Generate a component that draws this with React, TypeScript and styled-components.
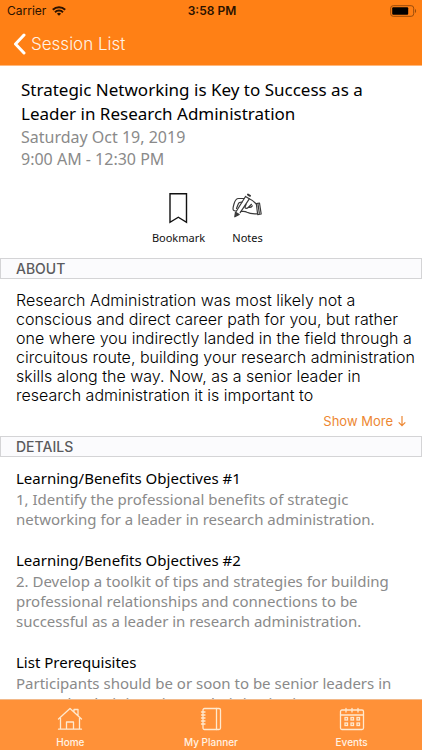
import React from "react";
import styled, { createGlobalStyle } from "styled-components";

const GlobalStyle = createGlobalStyle`
  * { box-sizing: border-box; }
  body { margin: 0; background: #fff; }
  h1, h2, h3, p { margin: 0; font-weight: 400; }
  button { border: 0; padding: 0; background: none; cursor: pointer; }
  a { text-decoration: none; }
`;

const humanist = `"Noto Sans", "Open Sans", sans-serif`;
const system = `Inter, Roboto, sans-serif`;

const Screen = styled.div`
  display: flex;
  flex-direction: column;
  height: 100vh;
  color: #000;
`;

const TopBar = styled.header`
  flex: none;
  background: #ff8015;
  border-bottom: 1px solid #ffb87c;
`;

const StatusBar = styled.div`
  display: grid;
  grid-template-columns: 1fr auto 1fr;
  align-items: center;
  height: 22px;
  padding: 0 5px 0 7px;
  font: 400 12px/14px ${system};
  color: #2b1200;
`;

const Carrier = styled.div`
  display: flex;
  align-items: center;
  gap: 6px;
`;

const Clock = styled.time`
  font-weight: 600;
`;

const Battery = styled.svg`
  justify-self: end;
`;

const BackButton = styled.button`
  display: flex;
  align-items: center;
  gap: 5px;
  height: 43px;
  margin-left: 13px;
  font: 300 17px/22px ${system};
  color: #fff3e6;
`;

const Content = styled.main`
  flex: 1;
  min-height: 0;
  overflow-y: auto;
  scrollbar-width: none;
`;

const Summary = styled.section`
  padding: 12px 21px 0;
`;

const Title = styled.h1`
  font: 400 17px/24px ${humanist};
`;

const When = styled.p`
  font: 400 16px/22px ${humanist};
  color: #8a8a8a;
`;

const Actions = styled.div`
  display: grid;
  grid-template-columns: 69px 69px;
  justify-content: center;
  padding: 22px 0 12px 4px;
`;

const Action = styled.button`
  display: flex;
  flex-direction: column;
  align-items: center;
  gap: 6px;
  font: 400 11px/16px ${humanist};
  color: #111;
`;

const SectionHeading = styled.h2`
  height: 21px;
  padding: 0 15px;
  border: 1px solid #d4d4d6;
  background: #fbfbfd;
  font: 500 14px/19px ${system};
  color: #5b5b5e;
`;

const About = styled.section`
  padding: 12px 2px 6px 16px;
`;

const AboutText = styled.p`
  font: 360 16px/19px ${system};
`;

const ShowMore = styled.button`
  display: flex;
  align-items: center;
  gap: 5px;
  margin: 7px 14px 0 auto;
  font: 400 13px/18px ${system};
  color: #ed8732;
`;

const Details = styled.section`
  display: flex;
  flex-direction: column;
  gap: 21px;
  padding: 11px 16px 20px;
`;

const DetailTitle = styled.h3`
  font: 400 15px/21px ${humanist};
`;

const DetailText = styled.p`
  font: 400 15px/20px ${humanist};
  color: #8a8a8a;
`;

const TabBar = styled.nav`
  flex: none;
  display: grid;
  grid-template-columns: repeat(3, 1fr);
  height: 51px;
  border-top: 1px solid #f2b98a;
  background: #ff9138;
`;

const Tab = styled.a`
  display: flex;
  flex-direction: column;
  align-items: center;
  gap: 4px;
  padding-top: 7px;
  font: 500 10px/14px ${system};
  color: #fff3e4;
`;

const WifiIcon = () => (
  <svg width="14" height="10" viewBox="0 0 14 10" fill="none" stroke="currentColor" strokeWidth="2" aria-hidden="true">
    <path d="M.8 3.8a8.8 8.8 0 0 1 12.4 0M3 6.2a5.7 5.7 0 0 1 8 0" />
    <path d="M7 9.800 4.900 7.800a3 3 0 0 1 4.200 0Z" fill="currentColor" stroke="none" />
  </svg>
);

const BackIcon = () => (
  <svg width="13" height="22" viewBox="0 0 13 22" fill="none" stroke="#fff" strokeWidth="3" strokeLinecap="round" strokeLinejoin="round" aria-hidden="true">
    <path d="M11 2 2.500 11l8.500 9" />
  </svg>
);

const BookmarkIcon = () => (
  <svg width="32" height="32" viewBox="0 0 32 32" fill="none" stroke="#111" strokeWidth="1.400" aria-hidden="true">
    <path d="M7 1.700h16.500v28.600l-8.200-5.100L7 30.300Z" />
  </svg>
);

const NotesIcon = () => (
  <svg width="32" height="32" viewBox="0 0 32 32" fill="none" stroke="#3a3a3a" strokeWidth="1.200" strokeLinecap="round" strokeLinejoin="round" aria-hidden="true">
    <path d="M13.500 4.500 4.500 19M17.300 6.800 8.200 20.700M13.500 4.500l3.800 2.300" />
    <path d="m2.800 24.800.7-4.600 3.700 2.200Z" fill="#3a3a3a" />
    <path d="m16 2.600 2 1.200" strokeWidth="2" />
    <path d="M11.800 6.500H6.500C4 6.500 3 8.500 2 12c-.8 2.800-1.600 5-.6 6.200.8 1 2 .8 3.100.8" />
    <path d="M4.500 16.500c1-2.500 1.500-5 2.800-6l2.500-.3" />
    <path d="M17.300 6.800c2.500 1 5 3.200 7 5.200M9 19.500c2.500-.3 4-.5 6 .8 3 1.800 6 1.600 9.800 1.500" />
    <path d="M14 12.500 13 15c-.3 1.500 2 1.700 3.200.5l3.300-3.200M16.500 15.300c2 .6 3-.3 3.800-1.500" />
    <path d="m24.300 11.500 3.200-.5 1.700 11-3.500.7ZM26 12.200l1.300 9" />
  </svg>
);

const ArrowDownIcon = () => (
  <svg width="8" height="12" viewBox="0 0 8 12" fill="none" stroke="currentColor" strokeWidth="1.200" aria-hidden="true">
    <path d="M4 1v9.500M.7 7.300 4 10.600l3.300-3.300" />
  </svg>
);

const HomeIcon = () => (
  <svg width="26" height="24" viewBox="0 0 26 24" fill="none" stroke="#ffe9cf" strokeWidth="1.300" strokeLinecap="round" strokeLinejoin="round" aria-hidden="true">
    <path d="M1.500 12 13 1.500 24.500 12M3.500 11v11M22.500 11v11M1.500 22.200h23M9.500 22v-7h7v7M17 5V2.500h4v6" />
  </svg>
);

const PlannerIcon = () => (
  <svg width="24" height="24" viewBox="0 0 24 24" fill="none" stroke="#ffe9cf" strokeWidth="1.300" strokeLinecap="round" aria-hidden="true">
    <rect x="4" y="1.500" width="17.500" height="21" rx="1.500" />
    <path d="M17.500 1.500v21M2.500 5h3.500M2.500 8h3.500M2.500 11h3.500M2.500 14h3.500M2.500 17h3.500" />
  </svg>
);

const CalendarIcon = () => (
  <svg width="26" height="24" viewBox="0 0 26 24" fill="none" stroke="#ffe9cf" strokeWidth="1.300" strokeLinecap="round" aria-hidden="true">
    <rect x="1.500" y="3" width="23" height="19.500" rx="1.500" />
    <path d="M1.500 8h23M7 1.500V5M13 1.500V5M19 1.500V5" />
    {[6, 12, 18].map((x) =>
      [10.5, 16].map((y) => <rect key={`${x}-${y}`} x={x} y={y} width="2.500" height="2.500" />)
    )}
  </svg>
);

const details = [
  {
    title: "Learning/Benefits Objectives #1",
    text: "1, Identify the professional benefits of strategic networking for a leader in research administration.",
  },
  {
    title: "Learning/Benefits Objectives #2",
    text: "2. Develop a toolkit of tips and strategies for building professional relationships and connections to be successful as a leader in research administration.",
  },
  {
    title: "List Prerequisites",
    text: "Participants should be or soon to be senior leaders in research administration at their institution.",
  },
];

const tabs = [
  { label: "Home", Icon: HomeIcon },
  { label: "My Planner", Icon: PlannerIcon },
  { label: "Events", Icon: CalendarIcon },
];

export default function App() {
  return (
    <Screen>
      <GlobalStyle />
      <TopBar>
        <StatusBar>
          <Carrier>
            Carrier
            <WifiIcon />
          </Carrier>
          <Clock>3:58 PM</Clock>
          <Battery width="27" height="12" viewBox="0 0 27 12" fill="none" aria-hidden="true">
            <rect x=".7" y=".7" width="23" height="10.600" rx="2.500" stroke="#9a4c0c" />
            <rect x="2.200" y="2.200" width="16" height="7.600" rx="1" fill="#000" />
            <path d="M25 4v4c1.500-.5 1.500-3.500 0-4Z" fill="#9a4c0c" />
          </Battery>
        </StatusBar>
        <BackButton type="button">
          <BackIcon />
          Session List
        </BackButton>
      </TopBar>
      <Content>
        <Summary>
          <Title>Strategic Networking is Key to Success as a Leader in Research Administration</Title>
          <When>Saturday Oct 19, 2019</When>
          <When>9:00 AM - 12:30 PM</When>
        </Summary>
        <Actions>
          <Action type="button">
            <BookmarkIcon />
            Bookmark
          </Action>
          <Action type="button">
            <NotesIcon />
            Notes
          </Action>
        </Actions>
        <SectionHeading>ABOUT</SectionHeading>
        <About>
          <AboutText>
            Research Administration was most likely not a conscious and direct career path for you, but rather one
            where you indirectly landed in the field through a circuitous route, building your research
            administration skills along the way. Now, as a senior leader in research administration it is
            important to
          </AboutText>
          <ShowMore type="button">
            Show More
            <ArrowDownIcon />
          </ShowMore>
        </About>
        <SectionHeading>DETAILS</SectionHeading>
        <Details>
          {details.map(({ title, text }) => (
            <div key={title}>
              <DetailTitle>{title}</DetailTitle>
              <DetailText>{text}</DetailText>
            </div>
          ))}
        </Details>
      </Content>
      <TabBar>
        {tabs.map(({ label, Icon }) => (
          <Tab key={label} href="#">
            <Icon />
            {label}
          </Tab>
        ))}
      </TabBar>
    </Screen>
  );
}
